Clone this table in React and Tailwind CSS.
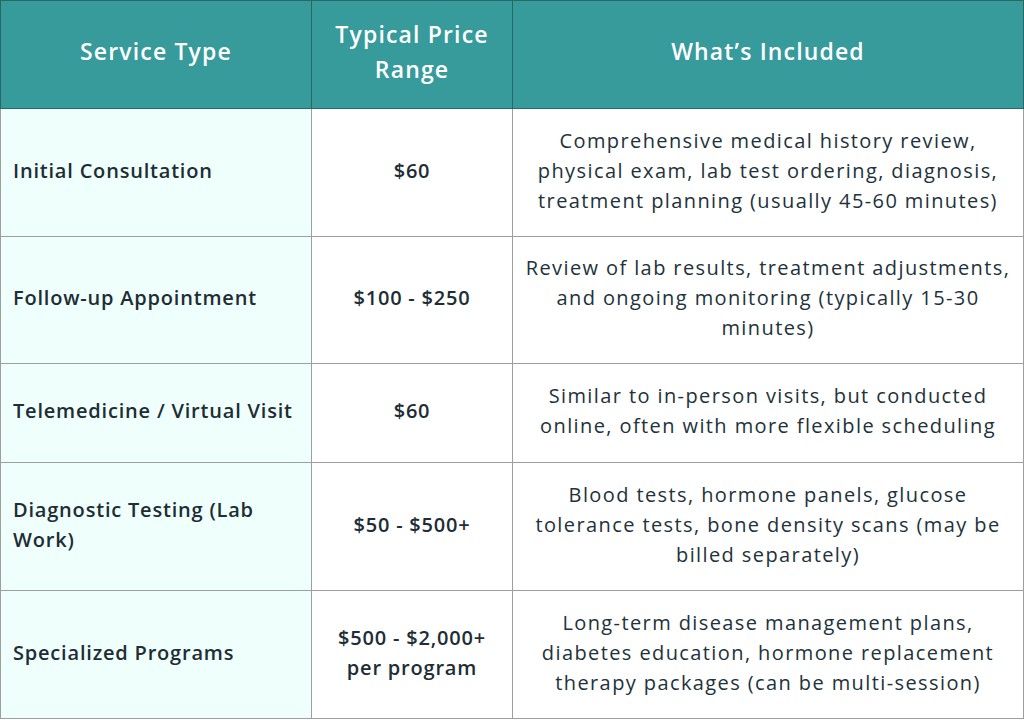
import React from 'react';

const rows = [
  {
    service: ['Initial Consultation'],
    price: ['$60'],
    included: ['Comprehensive medical history review,', 'physical exam, lab test ordering, diagnosis,', 'treatment planning (usually 45-60 minutes)'],
    height: 'h-[128px]',
  },
  {
    service: ['Follow-up Appointment'],
    price: ['$100 - $250'],
    included: ['Review of lab results, treatment adjustments,', 'and ongoing monitoring (typically 15-30', 'minutes)'],
    height: 'h-[127px]',
  },
  {
    service: ['Telemedicine / Virtual Visit'],
    price: ['$60'],
    included: ['Similar to in-person visits, but conducted', 'online, often with more flexible scheduling'],
    height: 'h-[99px]',
  },
  {
    service: ['Diagnostic Testing (Lab', 'Work)'],
    price: ['$50 - $500+'],
    included: ['Blood tests, hormone panels, glucose', 'tolerance tests, bone density scans (may be', 'billed separately)'],
    height: 'h-[128px]',
  },
  {
    service: ['Specialized Programs'],
    price: ['$500 - $2,000+', 'per program'],
    included: ['Long-term disease management plans,', 'diabetes education, hormone replacement', 'therapy packages (can be multi-session)'],
    height: 'h-[128px]',
  },
];

const Lines = ({ items }) => items.map((t) => <div key={t} className="whitespace-nowrap">{t}</div>);

const App = () => {
  return (
    <div className="w-[1024px] h-[720px] bg-white font-['Open_Sans',sans-serif] text-[#1e2d36]">
      <table className="w-[1024px] border-collapse table-fixed">
        <colgroup>
          <col className="w-[311px]" />
          <col className="w-[201px]" />
          <col />
        </colgroup>
        <thead>
          <tr className="h-[108px] bg-[#379b9c] text-white text-[23px] leading-[35px] tracking-[0.05em]">
            <th className="border border-[#2a6868] px-5 pb-[6px] font-semibold">Service Type</th>
            <th className="border border-[#2a6868] px-5 pb-[6px] font-semibold">
              <div>Typical Price</div>
              <div>Range</div>
            </th>
            <th className="border border-[#2a6868] px-5 pb-[6px] font-semibold">What’s Included</th>
          </tr>
        </thead>
        <tbody className="text-[20px] leading-[30px]">
          {rows.map((row) => (
            <tr key={row.service[0]} className={row.height}>
              <td className="border border-[#9e9e9e] bg-[#effffc] pl-3 pr-2 pb-[4px] font-semibold tracking-[0.04em]">
                <Lines items={row.service} />
              </td>
              <td className="border border-[#9e9e9e] px-2 pb-[4px] text-center font-semibold tracking-[0.04em]">
                <Lines items={row.price} />
              </td>
              <td className="border border-[#9e9e9e] px-2 pb-[4px] text-center text-[#22323b] tracking-[0.07em]">
                <Lines items={row.included} />
              </td>
            </tr>
          ))}
        </tbody>
      </table>
    </div>
  );
};

export default App;
